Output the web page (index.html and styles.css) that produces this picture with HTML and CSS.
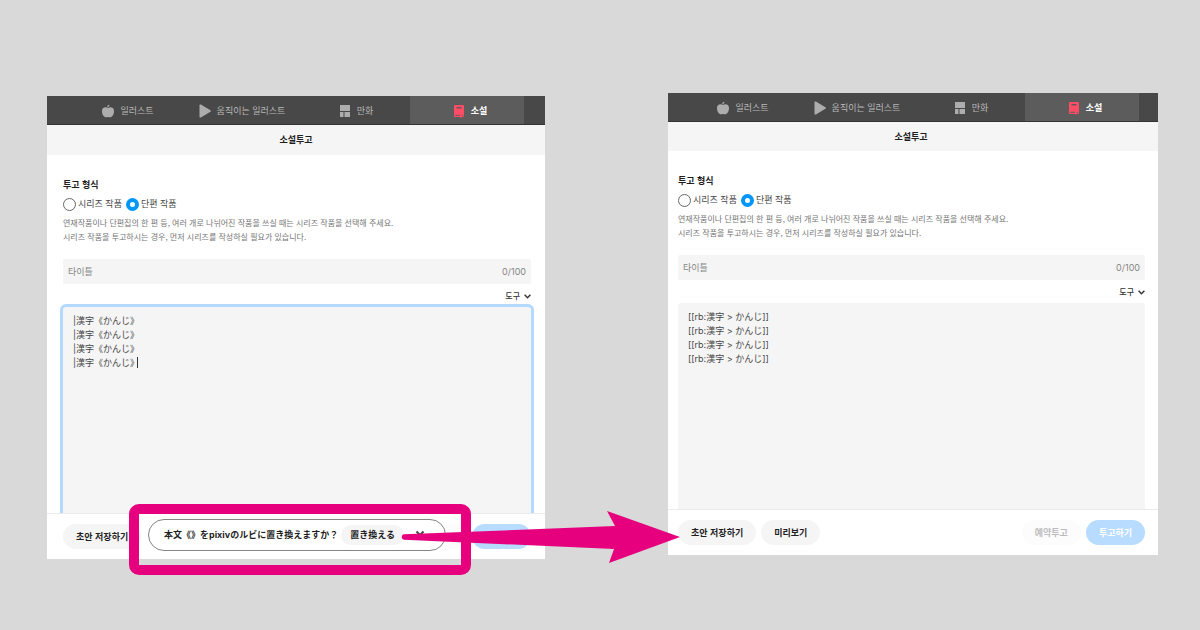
FILE: index.html
```html
<!DOCTYPE html>
<html lang="ko">
<head>
  <meta charset="UTF-8">
  <meta name="viewport" content="width=device-width, initial-scale=1.0">
  <title>소설투고</title>
  <link rel="stylesheet" href="styles.css">
</head>
<body>
  <svg class="symbols" aria-hidden="true">
    <symbol id="apple" viewBox="0 0 12 14">
      <path d="M6 4C4 2.8 0 3 0 7.2C0 10.5 2 13.3 4 13.3C5 13.3 5.3 13 6 13C6.7 13 7 13.3 8 13.3C10 13.3 12 10.5 12 7.2C12 3 8 2.8 6 4Z"/>
      <path d="M5.2 3.4C5.1 1.8 6 1 7.4 .8C7.4 2.2 6.6 3.2 5.2 3.4Z"/>
    </symbol>
    <symbol id="play" viewBox="0 0 12 14">
      <path d="M.5 1.2C.5.4 1.2.2 1.9.6L11.4 6.2C12 6.6 12 7.4 11.4 7.8L1.9 13.4C1.2 13.8.5 13.5.5 12.7Z"/>
    </symbol>
    <symbol id="manga" viewBox="0 0 12 14">
      <path d="M1 1H11V7H1ZM1 8H4.5V13H1ZM5.5 8H11V13H5.5Z"/>
    </symbol>
    <symbol id="book" viewBox="0 0 12 14">
      <path fill-rule="evenodd" d="M2 1H10Q11 1 11 2V12L10 13H8.8L8 14L7.2 13H2Q1 13 1 12V2Q1 1 2 1ZM3.5 3V4.5H8.5V3ZM2.2 10.8V11.8H7V10.8ZM8.8 10.8V11.8H10V10.8Z"/>
    </symbol>
    <symbol id="chevron" viewBox="0 0 7 5">
      <path d="M.6.8L3.5 3.7L6.4.8" fill="none" stroke="currentColor" stroke-width="1.4"/>
    </symbol>
  </svg>

  <main class="stage">
    <section class="panel before">
      <nav class="tabs">
        <a class="tab" href="#"><svg class="icon"><use href="#apple"/></svg>일러스트</a>
        <a class="tab" href="#"><svg class="icon"><use href="#play"/></svg>움직이는 일러스트</a>
        <a class="tab" href="#"><svg class="icon"><use href="#manga"/></svg>만화</a>
        <a class="tab active" href="#"><svg class="icon"><use href="#book"/></svg>소설</a>
      </nav>
      <h1 class="title">소설투고</h1>
      <div class="form">
        <h2 class="label">투고 형식</h2>
        <div class="radios">
          <label class="radio"><input type="radio" name="type1">시리즈 작품</label>
          <label class="radio"><input type="radio" name="type1" checked>단편 작품</label>
        </div>
        <p class="note">연재작품이나 단편집의 한 편 등, 여러 개로 나뉘어진 작품을 쓰실 때는 시리즈 작품을 선택해 주세요.<br>시리즈 작품을 투고하시는 경우, 먼저 시리즈를 작성하실 필요가 있습니다.</p>
        <div class="field">
          <input type="text" placeholder="타이틀" aria-label="타이틀">
          <span class="count">0/100</span>
        </div>
        <button class="tools" type="button">도구<svg class="chevron"><use href="#chevron"/></svg></button>
        <div class="editor focused">
          <textarea lang="ja" aria-label="본문" spellcheck="false">|漢字《かんじ》
|漢字《かんじ》
|漢字《かんじ》
|漢字《かんじ》</textarea>
          <span class="caret"></span>
        </div>
      </div>
      <footer class="actions">
        <button type="button">초안 저장하기</button>
        <button class="reserve" type="button" disabled>예약투고</button>
        <button class="publish" type="button" disabled>투고하기</button>
      </footer>

      <div class="frame">
        <div class="toast" lang="ja">
          <span>本文《》をpixivのルビに置き換えますか？</span>
          <button class="replace" type="button">置き換える</button>
          <button class="close" type="button" aria-label="閉じる">
            <svg viewBox="0 0 10 10"><path d="M1.5 1.5L8.5 8.5M8.5 1.5L1.5 8.5"/></svg>
          </button>
        </div>
      </div>
      <svg class="arrow" viewBox="0 0 280 52" aria-hidden="true">
        <path d="M3 23.3L214 15L206 0L279 26L208 52L213 38L3 28.7C0 28.2 0 23.8 3 23.3Z"/>
      </svg>
    </section>

    <section class="panel after">
      <nav class="tabs">
        <a class="tab" href="#"><svg class="icon"><use href="#apple"/></svg>일러스트</a>
        <a class="tab" href="#"><svg class="icon"><use href="#play"/></svg>움직이는 일러스트</a>
        <a class="tab" href="#"><svg class="icon"><use href="#manga"/></svg>만화</a>
        <a class="tab active" href="#"><svg class="icon"><use href="#book"/></svg>소설</a>
      </nav>
      <h1 class="title">소설투고</h1>
      <div class="form">
        <h2 class="label">투고 형식</h2>
        <div class="radios">
          <label class="radio"><input type="radio" name="type2">시리즈 작품</label>
          <label class="radio"><input type="radio" name="type2" checked>단편 작품</label>
        </div>
        <p class="note">연재작품이나 단편집의 한 편 등, 여러 개로 나뉘어진 작품을 쓰실 때는 시리즈 작품을 선택해 주세요.<br>시리즈 작품을 투고하시는 경우, 먼저 시리즈를 작성하실 필요가 있습니다.</p>
        <div class="field">
          <input type="text" placeholder="타이틀" aria-label="타이틀">
          <span class="count">0/100</span>
        </div>
        <button class="tools" type="button">도구<svg class="chevron"><use href="#chevron"/></svg></button>
        <div class="editor">
          <textarea lang="ja" aria-label="본문" spellcheck="false">[[rb:漢字 &gt; かんじ]]
[[rb:漢字 &gt; かんじ]]
[[rb:漢字 &gt; かんじ]]
[[rb:漢字 &gt; かんじ]]</textarea>
        </div>
      </div>
      <footer class="actions">
        <button type="button">초안 저장하기</button>
        <button type="button">미리보기</button>
        <button class="reserve" type="button" disabled>예약투고</button>
        <button class="publish" type="button" disabled>투고하기</button>
      </footer>
    </section>
  </main>
</body>
</html>
```

FILE: styles.css
```css
* {
  box-sizing: border-box;
}
body {
  margin: 0;
  background: #d9d9d9;
  color: #1f1f1f;
  font-family: "Noto Sans CJK KR", sans-serif;
  font-size: 9px;
  line-height: 14px;
}
button, input, textarea {
  margin: 0;
  padding: 0;
  border: none;
  background: none;
  color: inherit;
  font: inherit;
}
[lang="ja"] {
  font-family: Inter, "Noto Sans CJK JP", sans-serif;
}
.symbols {
  display: none;
}
.stage {
  display: grid;
  grid-template-columns: 498fr 490fr;
  column-gap: 123px;
  align-items: start;
  min-height: 100vh;
  padding: 93px 42px 0 47px;
}
.panel {
  position: relative;
  background: #fff;
}
.before {
  z-index: 1;
  margin-top: 3px;
}

/* tabs */
.tabs {
  display: flex;
  justify-content: center;
  height: 29px;
  background: #484848;
  border-bottom: 1px solid #333;
}
.tab {
  display: flex;
  align-items: center;
  justify-content: center;
  gap: 6px;
  width: 114px;
  padding: 1px 0 0 6px;
  color: #b8b8b8;
  text-decoration: none;
  white-space: nowrap;
}
.tab.active {
  background: #5c5c5c;
  color: #fff;
  font-weight: bold;
}
.icon {
  flex: none;
  width: 12px;
  height: 14px;
  fill: #adadad;
}
.active .icon {
  fill: #ff4d66;
}
.title {
  margin: 0;
  background: #f5f5f5;
  font-size: 9px;
  line-height: 30px;
  text-align: center;
}

/* form */
.form {
  padding: 22px 14px 0 16px;
  overflow: hidden;
}
.label {
  margin: 0;
  font-size: 9px;
  line-height: 16px;
}
.radios {
  display: flex;
  gap: 4px;
  margin-top: 3px;
}
.radio {
  display: flex;
  align-items: center;
  gap: 2px;
  height: 16px;
  color: #474747;
}
.radio input {
  appearance: none;
  width: 13px;
  height: 13px;
  border: 1px solid #666;
  border-radius: 50%;
  background: #fff;
}
.radio input:checked {
  border: 4px solid #0096fa;
}
.note {
  margin: 4px 0 0;
  color: #757575;
  font-size: 8px;
  white-space: nowrap;
}
.field {
  display: flex;
  align-items: center;
  height: 25px;
  margin-top: 15px;
  padding: 0 5px;
  border-radius: 2px;
  background: #f5f5f5;
  color: #858585;
}
.field input {
  flex: 1;
  min-width: 0;
}
.field input::placeholder {
  color: #858585;
}
.count {
  font-family: Inter, sans-serif;
}
.tools {
  display: flex;
  align-items: center;
  gap: 4px;
  height: 16px;
  margin: 4px 0 3px auto;
  color: #333;
  font-size: 8px;
  font-weight: 500;
}
.chevron {
  width: 7px;
  height: 5px;
}
.editor {
  position: relative;
  height: 206px;
  border-radius: 3px 3px 0 0;
  background: #f5f5f5;
}
.focused {
  box-shadow: 0 0 0 3px #b3d9ff;
}
.editor textarea {
  display: block;
  width: 100%;
  height: 100%;
  padding: 7px 10px;
  outline: none;
  resize: none;
  color: #474747;
}
.caret {
  position: absolute;
  top: 50px;
  left: 74px;
  width: 1px;
  height: 11px;
  background: #333;
}

/* bottom bar */
.actions {
  display: flex;
  gap: 5px;
  padding: 10px 14px 10px 16px;
  border-top: 1px solid #ebebeb;
}
.actions button {
  height: 25px;
  padding: 0 13px;
  border-radius: 13px;
  background: #f5f5f5;
  font-weight: bold;
}
.actions .reserve {
  margin-left: auto;
  background: #fcfcfc;
  color: #bcbcbc;
}
.actions .publish {
  background: #b8dcff;
  color: #fff;
}

.after .tabs {
  padding-right: 4px;
}
.after .title {
  padding-right: 4px;
  line-height: 29px;
}
.after .form {
  padding-left: 10px;
  padding-right: 13px;
}
.after .actions {
  padding-left: 10px;
  padding-right: 13px;
}

/* callout */
.frame {
  position: absolute;
  left: 82px;
  bottom: -16px;
  width: 342px;
  height: 71px;
  padding: 5px 15px 14px 9px;
  border: 10px solid #e6007e;
  border-radius: 10px;
}
.toast {
  display: flex;
  align-items: center;
  height: 32px;
  padding: 0 20px 0 15px;
  border: 1px solid #858585;
  border-radius: 16px;
  background: #fff;
  font-weight: bold;
  white-space: nowrap;
}
.replace {
  height: 20px;
  margin-left: 3px;
  padding: 0 9px;
  border-radius: 10px;
  background: #f5f5f5;
}
.close {
  display: flex;
  margin-left: auto;
}
.close svg {
  width: 10px;
  height: 10px;
  stroke: #474747;
  stroke-width: 2;
}
.arrow {
  position: absolute;
  left: 354px;
  bottom: -4px;
  width: 280px;
  height: 52px;
  fill: #e6007e;
}
```
